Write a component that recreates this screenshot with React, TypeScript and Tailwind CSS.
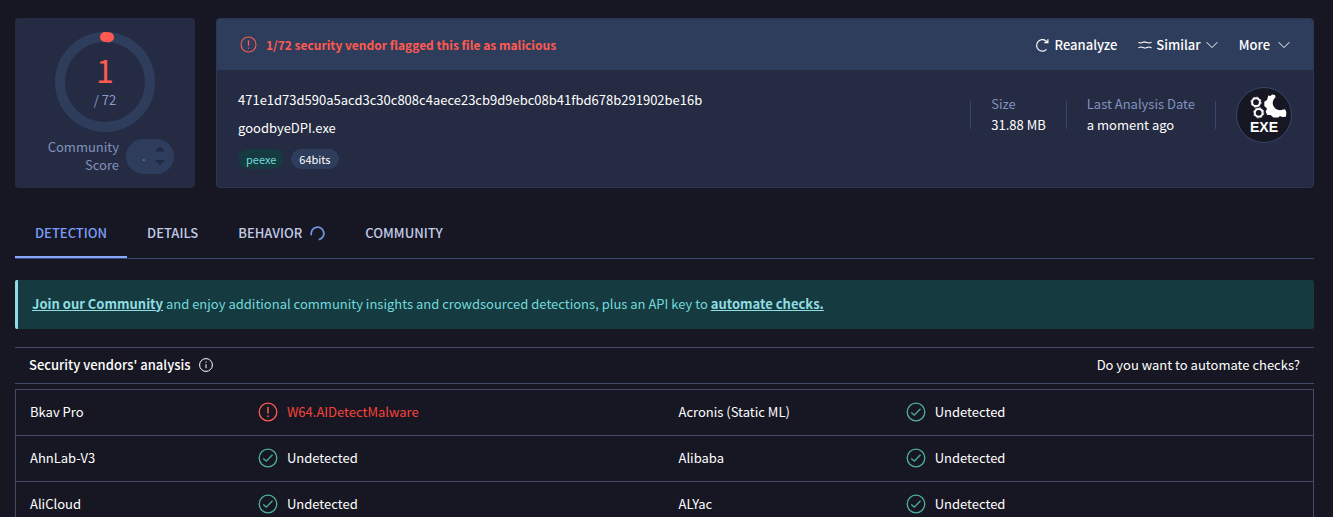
import type { ReactNode } from "react";

const verdicts: [string, string | null, string, string | null][] = [
  ["Bkav Pro", "W64.AIDetectMalware", "Acronis (Static ML)", null],
  ["AhnLab-V3", null, "Alibaba", null],
  ["AliCloud", null, "ALYac", null],
];

function AlertIcon({ className }: { className: string }) {
  return (
    <svg viewBox="0 0 20 20" className={className} fill="none" stroke="currentColor" aria-hidden="true">
      <circle cx="10" cy="10" r="8.8" strokeWidth="1.3" />
      <path d="M10 5v6.4" strokeWidth="1.5" />
      <path d="M10 13.4v1.5" strokeWidth="1.5" />
    </svg>
  );
}

function CheckIcon() {
  return (
    <svg viewBox="0 0 20 20" className="size-5 shrink-0" fill="none" stroke="currentColor" strokeWidth="1.3" aria-hidden="true">
      <circle cx="10" cy="10" r="8.8" />
      <path d="M5.3 10.4l3 2.8 6.2-6.4" />
    </svg>
  );
}

function ChevronIcon() {
  return (
    <svg viewBox="0 0 12 12" className="size-3" fill="none" stroke="currentColor" strokeWidth="1" aria-hidden="true">
      <path d="M.6 3.2L6 8.6l5.4-5.4" />
    </svg>
  );
}

function ScoreRing() {
  return (
    <div className="relative flex size-[100px] flex-col items-center justify-center gap-[3px]">
      <svg viewBox="0 0 100 100" className="absolute inset-0 size-full" fill="none" strokeWidth="10" aria-hidden="true">
        <circle cx="50" cy="50" r="45" stroke="#2f3d5c" />
        <path d="M50 5a45 45 0 0 1 4 .2" stroke="#ff5a50" strokeLinecap="round" />
      </svg>
      <span className="relative text-[32px] leading-8 text-[#ff5a50]">1</span>
      <span className="relative text-[13px] leading-6 text-[#8b9bc8]">/ 72</span>
    </div>
  );
}

function ExeBadge() {
  return (
    <svg viewBox="0 0 56 56" className="size-14" role="img" aria-label="EXE file">
      <circle cx="28" cy="28" r="27.5" fill="#171723" stroke="#36486f" />
      <g fill="none" stroke="#fff">
        <circle cx="20" cy="15.2" r="3.9" strokeWidth="2" />
        <circle cx="20" cy="15.2" r="5.1" strokeWidth=".8" strokeDasharray="2 2" />
        <circle cx="22.700" cy="25.800" r="3.9" strokeWidth="2" />
        <circle cx="22.700" cy="25.800" r="5.1" strokeWidth=".8" strokeDasharray="2 2" />
      </g>
      <path
        d="M32.300 8.500L34.500 9 36 7.500 39 8 39.600 10.300C37 12.500 36.300 15 37 18 38 21 40.500 23 44 23.200L49 22.300 50.300 25 50 29.800 46 30 44 29 42.300 30.500 37.300 30.500 34.700 28 31.300 27.900 29.700 24.700 31 21.500 28.300 19 28.300 14.700 31 13z"
        fill="#fff"
      />
      <text x="28" y="45" textAnchor="middle" fill="#fff" fontFamily="Liberation Sans, sans-serif" fontSize="14" fontWeight="700">
        EXE
      </text>
    </svg>
  );
}

function Verdict({ threat }: { threat: string | null }) {
  return (
    <div className="flex items-center gap-[9px]">
      {threat ? (
        <span className="text-[#ff5a50]"><AlertIcon className="size-5" /></span>
      ) : (
        <span className="text-[#4fb09a]"><CheckIcon /></span>
      )}
      <span className={threat ? "text-[#f9423a]" : ""}>{threat ?? "Undetected"}</span>
    </div>
  );
}

function Tab({ children, active = false }: { children: ReactNode; active?: boolean }) {
  return (
    <button
      type="button"
      role="tab"
      aria-selected={active}
      className={
        active
          ? "flex h-[50px] items-center border-b-2 border-[#86a9ff] px-5 pt-[2px] text-[#7c9df8]"
          : "flex h-[50px] items-center gap-2 border-b-2 border-transparent px-5 pt-[2px] text-[#c0cbe8]"
      }
    >
      {children}
    </button>
  );
}

export default function App() {
  return (
    <main className="min-h-screen bg-[#171723] pt-[18px] pr-[19px] pl-[15px] font-['Noto_Sans_CJK_JP',sans-serif] text-[13px] leading-[18px] text-white">
      <div className="flex gap-[21px]">
        <section className="flex h-[170px] w-[180px] shrink-0 flex-col items-center rounded bg-[#242b42] pt-[14px]">
          <ScoreRing />
          <div className="mt-[6px] flex w-full items-center gap-[7px] pr-[21px] pl-[30px] text-[#8192bf]">
            <span className="flex-1 text-right">Community Score</span>
            <div className="flex h-[35px] w-12 items-center justify-between rounded-full bg-[#2f3d5c] pr-[9px] pl-4">
              <span className="text-[#76809c]">.</span>
              <svg viewBox="0 0 10 20" className="h-5 w-[10px]" fill="#202940" aria-hidden="true">
                <path d="M0 5.500L5 0l5 5.500zM0 14h10l-5 5.500z" />
              </svg>
            </div>
          </div>
        </section>

        <section className="min-w-0 flex-1 overflow-hidden rounded border border-[#2b3653] bg-[#242b42]">
          <header className="flex h-[51px] items-center bg-[#2f3d5c] px-[23px]">
            <AlertIcon className="mr-[9px] size-[17px] text-[#ff5a50]" />
            <h1 className="flex-1 text-xs font-bold text-[#ff5a50]">1/72 security vendor flagged this file as malicious</h1>
            <div className="flex items-center gap-[21px] font-medium">
              <button type="button" className="flex items-center gap-[6px]">
                <svg viewBox="0 0 14 14" className="size-[14px]" fill="none" stroke="currentColor" strokeWidth="1.2" aria-hidden="true">
                  <path d="M11.500 11.300A5.700 5.700 0 1 1 11 3L12.600 4.300M12.900 1.300v3.300H9.300" />
                </svg>
                Reanalyze
              </button>
              <button type="button" className="flex items-center">
                <svg viewBox="0 0 14 10" className="mr-1 h-[10px] w-[14px]" fill="none" stroke="currentColor" strokeWidth="1.1" aria-hidden="true">
                  <path d="M.5 2.200C2 3.500 3.500 3 5 2.200S7.500 2 9 2.600s3 .4 4.500-.4M.5 7.800c1.500-.8 3-1 4.500-.4s2.500 1 4 .2 3-.9 4.500.4" />
                </svg>
                <span className="mr-[5px]">Similar</span>
                <ChevronIcon />
              </button>
              <button type="button" className="flex items-center gap-2">
                More
                <ChevronIcon />
              </button>
            </div>
          </header>
          <div className="flex items-start justify-between pt-[17px] pr-[21px] pl-[21px]">
            <div className="flex flex-col gap-[10px] pt-1">
              <p>471e1d73d590a5acd3c30c808c4aece23cb9d9ebc08b41fbd678b291902be16b</p>
              <p>goodbyeDPI.exe</p>
              <div className="mt-[2px] flex gap-[7px] text-[11px] leading-5">
                <a href="#peexe" className="rounded-full bg-[#153a3f] px-2 text-[#73d9dc]">peexe</a>
                <a href="#64bits" className="rounded-full bg-[#2f3d5c] px-2">64bits</a>
              </div>
            </div>
            <div className="flex items-center gap-5">
              <div className="h-7 w-px bg-[#36486f]" />
              <div className="pb-[2px] leading-[21px]">
                <p className="text-[#8192bf]">Size</p>
                <p>31.88 MB</p>
              </div>
              <div className="h-7 w-px bg-[#36486f]" />
              <div className="pb-[2px] leading-[21px]">
                <p className="text-[#8192bf]">Last Analysis Date</p>
                <p>a moment ago</p>
              </div>
              <div className="h-7 w-px bg-[#36486f]" />
              <ExeBadge />
            </div>
          </div>
        </section>
      </div>

      <nav role="tablist" className="mt-5 flex border-b border-[#36486f] font-medium">
        <Tab active>DETECTION</Tab>
        <Tab>DETAILS</Tab>
        <Tab>
          BEHAVIOR
          <svg viewBox="0 0 15 15" className="size-[15px]" fill="none" stroke="#6f93e0" strokeWidth="1.8" strokeLinecap="round" aria-hidden="true">
            <path d="M1.300 8.500A6.300 6.300 0 1 1 9.500 13.400" />
          </svg>
        </Tab>
        <Tab>COMMUNITY</Tab>
      </nav>

      <p className="mt-[21px] flex h-[49px] items-center rounded-xs border-l-3 border-[#8fdde2] bg-[#153a3f] px-[14px] pb-[2px] text-[#73d9dc]">
        <span>
          <a href="#join" className="font-bold text-[#8fdde2] underline">Join our Community</a> and enjoy additional community insights and
          crowdsourced detections, plus an API key to{" "}
          <a href="#automate" className="font-bold text-[#8fdde2] underline">automate checks.</a>
        </span>
      </p>

      <div className="mt-[18px] flex h-[37px] items-center justify-between border-y border-[#424a68] px-[14px] pb-[2px] font-medium">
        <h2 className="flex items-center gap-[9px]">
          Security vendors' analysis
          <svg viewBox="0 0 14 14" className="size-[14px]" fill="none" stroke="currentColor" aria-hidden="true">
            <circle cx="7" cy="7" r="6.400" />
            <path d="M7 6.200v4M7 3.500v1.200" />
          </svg>
        </h2>
        <a href="#automate-checks" className="font-normal">Do you want to automate checks?</a>
      </div>

      <table className="mt-[5px] w-full table-fixed border-collapse border border-[#424a68] text-left">
        <colgroup>
          <col className="w-[17.6%]" />
          <col className="w-[32.4%]" />
          <col className="w-[17.5%]" />
          <col className="w-[32.5%]" />
        </colgroup>
        <tbody>
          {verdicts.map(([left, leftThreat, right, rightThreat]) => (
            <tr key={left} className="h-[46px] border-b border-[#424a68]">
              <td className="px-[14px] pb-[2px]">{left}</td>
              <td className="px-[14px] pb-[2px]"><Verdict threat={leftThreat} /></td>
              <td className="px-[14px] pb-[2px]">{right}</td>
              <td className="px-[14px] pb-[2px]"><Verdict threat={rightThreat} /></td>
            </tr>
          ))}
        </tbody>
      </table>
    </main>
  );
}
